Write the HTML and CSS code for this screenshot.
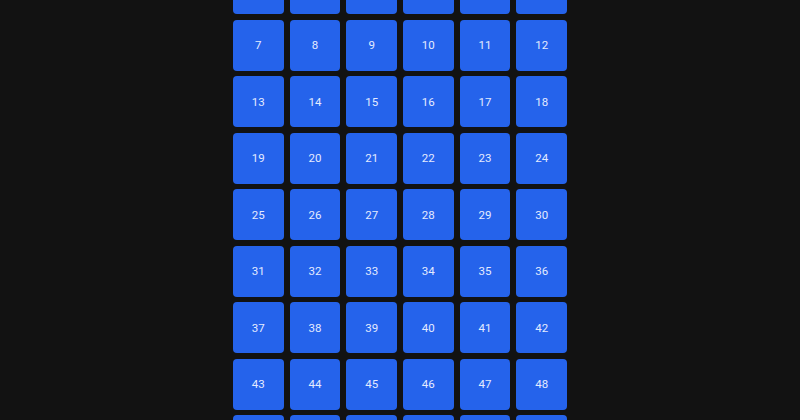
FILE: index.html
```html
<!DOCTYPE html>
<html lang="en">
<head>
  <meta charset="UTF-8">
  <meta name="viewport" content="width=device-width, initial-scale=1.0">
  <title>Number Grid</title>
  <link rel="stylesheet" href="styles.css">
</head>
<body>
  <div class="grid">
    <div class="tile">1</div><div class="tile">2</div><div class="tile">3</div>
    <div class="tile">4</div><div class="tile">5</div><div class="tile">6</div>
    <div class="tile">7</div><div class="tile">8</div><div class="tile">9</div>
    <div class="tile">10</div><div class="tile">11</div><div class="tile">12</div>
    <div class="tile">13</div><div class="tile">14</div><div class="tile">15</div>
    <div class="tile">16</div><div class="tile">17</div><div class="tile">18</div>
    <div class="tile">19</div><div class="tile">20</div><div class="tile">21</div>
    <div class="tile">22</div><div class="tile">23</div><div class="tile">24</div>
    <div class="tile">25</div><div class="tile">26</div><div class="tile">27</div>
    <div class="tile">28</div><div class="tile">29</div><div class="tile">30</div>
    <div class="tile">31</div><div class="tile">32</div><div class="tile">33</div>
    <div class="tile">34</div><div class="tile">35</div><div class="tile">36</div>
    <div class="tile">37</div><div class="tile">38</div><div class="tile">39</div>
    <div class="tile">40</div><div class="tile">41</div><div class="tile">42</div>
    <div class="tile">43</div><div class="tile">44</div><div class="tile">45</div>
    <div class="tile">46</div><div class="tile">47</div><div class="tile">48</div>
    <div class="tile">49</div><div class="tile">50</div><div class="tile">51</div>
    <div class="tile">52</div><div class="tile">53</div><div class="tile">54</div>
  </div>
</body>
</html>
```

FILE: styles.css
```css
/* Page */
html {
  overflow: hidden;
}

body {
  margin: 0;
  background: #121212;
  font-family: 'Roboto', 'Liberation Sans', sans-serif;
}

/* Number grid, scrolled past the first row */
.grid {
  width: 334px;
  margin: -36.5px auto 0;
  display: grid;
  grid-template-columns: repeat(6, 1fr);
  grid-auto-rows: 50.7px;
  column-gap: 6px;
  row-gap: 5.8px;
}

.tile {
  display: flex;
  justify-content: center;
  align-items: center;
  background: #2563eb;
  color: #e4ebff;
  border-radius: 4px;
  font-size: 11.5px;
  font-weight: 400;
}
```
